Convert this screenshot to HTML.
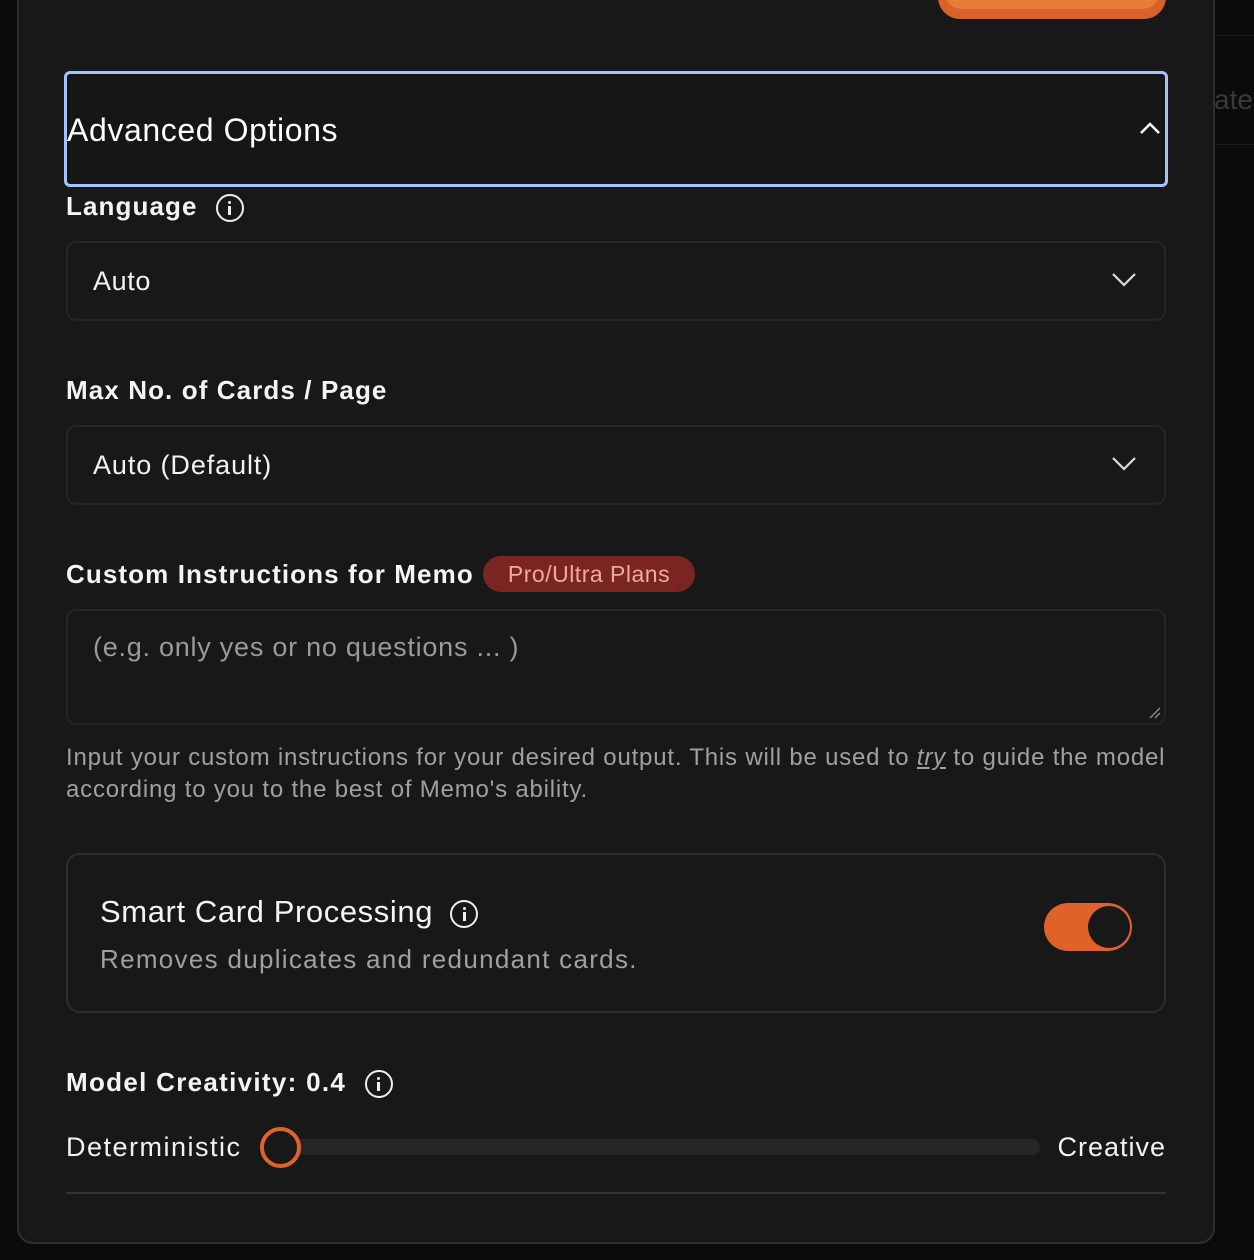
<!DOCTYPE html>
<html><head><style>
*{box-sizing:border-box;margin:0;padding:0}
body{width:1254px;height:1260px;background:#0b0b0b;font-family:"Liberation Sans",sans-serif;color:#f2f2f2;position:relative;overflow:hidden}
.a{position:absolute}
.panel{left:17px;top:-20px;width:1198px;height:1264px;background:#181818;border:2px solid #2e2e2e;border-radius:16px}
.lbl{font-size:26px;font-weight:bold;color:#f4f4f4;letter-spacing:1.1px;white-space:nowrap}
.sel{border:2px solid #262626;border-radius:10px;background:#181818}
.info{display:inline-block;width:28px;height:28px;border:2.5px solid #eee;border-radius:50%;position:relative;vertical-align:middle}
.info:before{content:"";position:absolute;left:10.5px;top:5px;width:3px;height:3px;background:#eee;border-radius:50%}
.info:after{content:"";position:absolute;left:10.5px;top:10px;width:3px;height:9px;background:#eee}
</style></head><body>
<div class="a" style="left:1216px;top:0;width:38px;height:36px;border-bottom:1px solid #1e1e1e"></div>
<div class="a" style="left:1216px;top:144px;width:38px;border-top:1px solid #1e1e1e"></div>
<div class="a" style="left:1214px;top:84px;font-size:28px;color:#3a3a3a">ate</div>
<div class="a panel"></div>
<div class="a" style="left:938px;top:-12px;width:228px;height:31px;background:#d9622a;border-radius:0 0 22px 22px"></div>
<div class="a" style="left:944px;top:-12px;width:216px;height:21px;background:#e97d38;border-radius:0 0 18px 18px"></div>

<div class="a" style="left:64px;top:71px;width:1104px;height:116px;border:3px solid #a3c4f8;border-radius:6px;background:#161616"></div>
<div class="a" style="left:67px;top:112px;font-size:32px;color:#fff;letter-spacing:0.6px">Advanced Options</div>
<svg class="a" style="left:1138px;top:120px" width="24" height="16"><path d="M3 13 L12 4 L21 13" fill="none" stroke="#fff" stroke-width="2.5"/></svg>

<div class="a lbl" style="left:66px;top:191px">Language <span class="info" style="margin-left:10px"></span></div>
<div class="a sel" style="left:66px;top:241px;width:1100px;height:80px"></div>
<div class="a" style="left:93px;top:266px;font-size:27px;letter-spacing:0.6px">Auto</div>
<svg class="a" style="left:1110px;top:270px" width="28" height="18"><path d="M3 4 L14 15 L25 4" fill="none" stroke="#ddd" stroke-width="2.2"/></svg>

<div class="a lbl" style="left:66px;top:375px">Max No. of Cards / Page</div>
<div class="a sel" style="left:66px;top:425px;width:1100px;height:80px"></div>
<div class="a" style="left:93px;top:450px;font-size:27px;letter-spacing:0.9px">Auto (Default)</div>
<svg class="a" style="left:1110px;top:454px" width="28" height="18"><path d="M3 4 L14 15 L25 4" fill="none" stroke="#ddd" stroke-width="2.2"/></svg>

<div class="a lbl" style="left:66px;top:559px">Custom Instructions for Memo</div>
<div class="a" style="left:483px;top:556px;width:212px;height:36px;background:#7a2522;border-radius:18px;color:#f0a8a2;font-size:23px;line-height:37px;text-align:center;letter-spacing:0.5px">Pro/Ultra Plans</div>
<div class="a sel" style="left:66px;top:609px;width:1100px;height:116px"></div>
<div class="a" style="left:93px;top:632px;font-size:27px;color:#9a9a9a;letter-spacing:0.75px">(e.g. only yes or no questions ... )</div>
<svg class="a" style="left:1148px;top:706px" width="14" height="14"><path d="M2 12 L12 2 M7 12 L12 7" stroke="#888" stroke-width="1.5"/></svg>
<div class="a" style="left:66px;top:742px;width:1108px;font-size:24px;line-height:32px;color:#a0a0a0;letter-spacing:0.8px">Input your custom instructions for your desired output. This will be used to <i style="text-decoration:underline">try</i> to guide the model according to you to the best of Memo's ability.</div>

<div class="a sel" style="left:66px;top:853px;width:1100px;height:160px;border-color:#2e2e2e;border-radius:14px"></div>
<div class="a" style="left:100px;top:894px;font-size:31px;color:#f4f4f4;letter-spacing:0.6px">Smart Card Processing <span class="info" style="margin-left:8px"></span></div>
<div class="a" style="left:100px;top:944px;font-size:26px;color:#a0a0a0;letter-spacing:1.3px">Removes duplicates and redundant cards.</div>
<div class="a" style="left:1044px;top:903px;width:88px;height:48px;background:#e0622b;border-radius:24px"></div>
<div class="a" style="left:1088px;top:906px;width:42px;height:42px;background:#181818;border-radius:50%"></div>

<div class="a lbl" style="left:66px;top:1067px;letter-spacing:1.3px">Model Creativity: 0.4 <span class="info" style="margin-left:10px"></span></div>
<div class="a" style="left:66px;top:1132px;font-size:27px;letter-spacing:1.5px">Deterministic</div>
<div class="a" style="left:262px;top:1139px;width:778px;height:16px;background:#262626;border-radius:8px"></div>
<div class="a" style="left:260px;top:1127px;width:41px;height:41px;border:4px solid #e0622b;border-radius:50%;background:#181818"></div>
<div class="a" style="left:1000px;top:1132px;font-size:27px;letter-spacing:1px;width:166px;text-align:right">Creative</div>
<div class="a" style="left:66px;top:1192px;width:1100px;height:2px;background:#333"></div>
</body></html>
